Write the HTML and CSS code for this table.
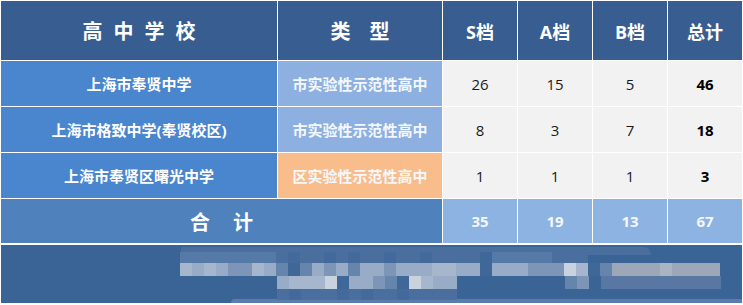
FILE: index.html
```html
<!DOCTYPE html>
<html lang="zh">
<head>
<meta charset="utf-8">
<title>高中学校</title>
<link rel="stylesheet" href="styles.css">
</head>
<body>
<div class="sheet">
  <div class="table">
    <div class="cell head big sp1">高中学校</div>
    <div class="cell head big sp2">类型</div>
    <div class="cell head">S档</div>
    <div class="cell head">A档</div>
    <div class="cell head">B档</div>
    <div class="cell head">总计</div>

    <div class="cell school">上海市奉贤中学</div>
    <div class="cell type city">市实验性示范性高中</div>
    <div class="cell num">26</div>
    <div class="cell num">15</div>
    <div class="cell num">5</div>
    <div class="cell num bold">46</div>

    <div class="cell school">上海市格致中学(奉贤校区)</div>
    <div class="cell type city">市实验性示范性高中</div>
    <div class="cell num">8</div>
    <div class="cell num">3</div>
    <div class="cell num">7</div>
    <div class="cell num bold">18</div>

    <div class="cell school">上海市奉贤区曙光中学</div>
    <div class="cell type district">区实验性示范性高中</div>
    <div class="cell num">1</div>
    <div class="cell num">1</div>
    <div class="cell num">1</div>
    <div class="cell num bold">3</div>

    <div class="cell total-label">合计</div>
    <div class="cell total">35</div>
    <div class="cell total">19</div>
    <div class="cell total">13</div>
    <div class="cell total">67</div>
  </div>

  <div class="banner">
    <div class="mosaic">
      <div class="mrow ra">
        <i class="a1"></i><i class="a1"></i><i class="a1"></i><i class="a1"></i><i class="a1"></i><i class="a1"></i><i class="a1"></i><i class="a1"></i>
        <i class="a2"></i><i class="a3"></i><i class="a2"></i><i class="a2"></i><i class="a3"></i><i class="a2"></i><i class="a3"></i><i class="a2"></i><i class="a2"></i><i class="a3"></i><i class="a2"></i><i class="a2"></i><i class="a3"></i><i class="a2"></i>
        <i class="a2"></i><i class="a2"></i><i class="a2"></i><i class="d"></i><i class="a1"></i><i class="a1"></i><i class="a1"></i><i class="a1"></i><i class="a1"></i><i class="a2"></i><i class="a2"></i><i class="a2"></i>
      </div>
      <div class="mrow rb">
        <i class="l1"></i><i class="l2"></i><i class="l1"></i><i class="l2"></i><i class="m1"></i><i class="m1"></i><i class="l1"></i><i class="l2"></i><i class="m2"></i><i class="d"></i><i class="m2"></i><i class="l2"></i><i class="m1"></i><i class="l2"></i><i class="m2"></i><i class="l2"></i><i class="l2"></i><i class="m1"></i><i class="l2"></i><i class="l2"></i><i class="l2"></i><i class="l1"></i>
        <i class="l1"></i><i class="l2"></i><i class="l2"></i><i class="d"></i><i class="l2"></i><i class="l2"></i><i class="l2"></i><i class="m1"></i><i class="m1"></i><i class="m1"></i><i class="l3"></i><i class="l1"></i><i class="d"></i><i class="m2"></i><i class="g1"></i><i class="g1"></i><i class="g1"></i><i class="g1"></i><i class="g2"></i><i class="g1"></i><i class="g1"></i><i class="g1"></i><i class="g1"></i>
      </div>
      <div class="mrow rc">
        <i class="gap8"></i>
        <i class="l2"></i><i class="l1"></i><i class="l1"></i><i class="l1"></i><i class="l3"></i><i class="d"></i><i class="l2"></i><i class="l2"></i><i class="m1"></i><i class="m2"></i><i class="d"></i><i class="l3"></i><i class="l1"></i><i class="l2"></i><i class="l2"></i>
        <i class="gap9"></i>
        <i class="m2"></i><i class="m1"></i><i class="e"></i><i class="m3"></i><i class="m3"></i><i class="m3"></i><i class="m3"></i><i class="m3"></i><i class="m3"></i><i class="m3"></i><i class="m3"></i><i class="m3"></i><i class="m3"></i>
      </div>
      <div class="mrow rd">
        <i class="gap8"></i>
        <i class="a2"></i><i class="a3"></i><i class="a2"></i><i class="a2"></i><i class="a2"></i><i class="a3"></i><i class="a2"></i><i class="a3"></i><i class="a2"></i><i class="a2"></i><i class="a3"></i><i class="a2"></i><i class="a2"></i><i class="a2"></i><i class="a2"></i>
      </div>
    </div>
  </div>
</div>
</body>
</html>
```

FILE: styles.css
```css
* { box-sizing: border-box; }

html, body {
  margin: 0;
  padding: 0;
  background: #ffffff;
}

body {
  font-family: "Open Sans", "Noto Sans CJK SC", sans-serif;
  width: 743px;
  height: 305px;
  overflow: hidden;
}

.sheet {
  width: 743px;
}

.table {
  display: grid;
  grid-template-columns: 276px 164px repeat(4, 74px);
  grid-template-rows: 59px 45px 45px 45px 44px;
  gap: 1px;
  padding: 1px 1px 0;
  background: #ffffff;
}

.cell {
  display: flex;
  align-items: center;
  justify-content: center;
  white-space: nowrap;
}

.head {
  background: #385e91;
  color: #ffffff;
  font-weight: 700;
  font-size: 18px;
}

.head.big {
  font-size: 20px;
}

.sp1 {
  letter-spacing: 11px;
  padding-left: 11px;
}

.sp2 {
  letter-spacing: 19px;
  padding-left: 19px;
}

.school {
  background: #4a86ce;
  color: #ffffff;
  font-weight: 700;
  font-size: 15px;
}

.type {
  color: #f4f7fb;
  font-weight: 700;
  font-size: 15px;
}

.city {
  background: #8db0e0;
}

.district {
  background: #f8bd8b;
}

.num {
  background: #f2f2f2;
  color: #1a1a1a;
  font-size: 15px;
}

.num.bold {
  font-weight: 700;
  color: #000000;
}

.total-label {
  grid-column: span 2;
  background: #4f81bd;
  color: #ffffff;
  font-weight: 700;
  font-size: 20px;
  letter-spacing: 23px;
  padding-left: 23px;
}

.total {
  background: #8db3e2;
  color: #f4f7fb;
  font-weight: 700;
  font-size: 15px;
}

.banner {
  position: relative;
  margin: 2px 1px 0;
  height: 58px;
  background: #3a6396;
  overflow: hidden;
}

.banner::before {
  content: "";
  position: absolute;
  left: 180px;
  top: 2px;
  width: 470px;
  height: 8px;
  background: #4a6f9f;
  border-radius: 8px 40px 0 0;
}

.banner::after {
  content: "";
  position: absolute;
  left: 230px;
  right: 0;
  bottom: 0;
  height: 4px;
  background: #5a7dab;
  border-radius: 30px 0 0 0;
}

.mosaic {
  position: relative;
  z-index: 1;
  display: flex;
  flex-direction: column;
  padding: 7px 0 0 179px;
}

.mrow {
  display: flex;
}

.mrow i {
  display: block;
  width: 12px;
  flex: none;
}

.ra i { height: 11px; }
.rb i { height: 13px; }
.rc i { height: 13px; }
.rd i { height: 11px; }

.mrow i.gap8 { width: 97px; }
.mrow i.gap9 { width: 108px; }

.a1 { background: #557aa7; }
.a2 { background: #4a6e9e; }
.a3 { background: #436a9b; }
.l1 { background: #a6b6cc; }
.l2 { background: #98acc7; }
.l3 { background: #c9d3df; }
.m1 { background: #7d96b8; }
.m2 { background: #6685ad; }
.m3 { background: #5878a3; }
.d  { background: #3f6898; }
.e  { background: transparent; }
.g1 { background: #9ca8b8; }
.g2 { background: #abb5c1; }
```
